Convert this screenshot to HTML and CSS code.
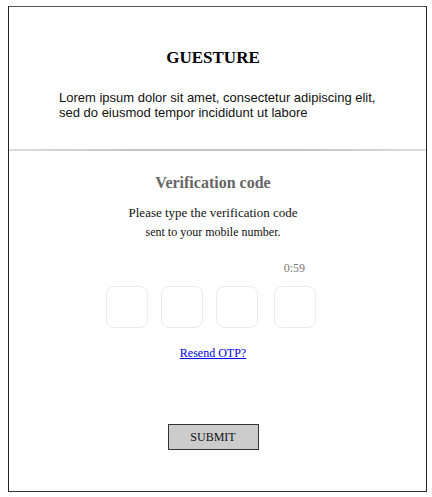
FILE: index.html
```html
<!DOCTYPE html>
<html>
<head>
<meta charset="utf-8">
<link rel="stylesheet" href="styles.css">
</head>
<body>
<div class="frame">
  <header class="top">
    <h1 class="brand">GUESTURE</h1>
    <p class="lorem">Lorem ipsum dolor sit amet, consectetur adipiscing elit,<br>sed do eiusmod tempor incididunt ut labore</p>
  </header>
  <div class="divider"></div>
  <section class="verify">
    <h2 class="vtitle">Verification code</h2>
    <p class="line1">Please type the verification code</p>
    <p class="line2">sent to your mobile number.</p>
    <div class="timer">0:59</div>
    <div class="otp">
      <div class="box"></div>
      <div class="box"></div>
      <div class="box"></div>
      <div class="box box-last"></div>
    </div>
    <a class="resend" href="#">Resend OTP?</a>
    <button class="submit">SUBMIT</button>
  </section>
</div>
</body>
</html>
```
FILE: styles.css
```css
html, body { margin: 0; padding: 0; background: #fff; }
body { font-family: "Liberation Serif", serif; }
.frame {
  margin: 6px 0 0 8px;
  width: 417px;
  height: 484px;
  border: 1px solid #222;
  border-top-color: #555;
  border-bottom-color: #333;
  display: flex;
  flex-direction: column;
}
.top { height: 142px; display: flex; flex-direction: column; align-items: center; padding-right: 9px; }
.brand {
  margin: 41px 0 0;
  font-size: 17px;
  font-weight: bold;
  line-height: 20px;
  color: #000;
}
.lorem {
  margin: 22px 0 0;
  align-self: flex-start;
  padding-left: 50px;
  font-family: "Liberation Sans", sans-serif;
  font-size: 13px;
  line-height: 15px;
  color: #111;
}
.divider { height: 2px; background: linear-gradient(90deg, #ddd, #c4c4c4 30%, #c4c4c4 70%, #ddd); }
.verify { display: flex; flex-direction: column; align-items: center; padding-right: 9px; }
.vtitle {
  margin: 22px 0 0;
  font-size: 16px;
  line-height: 20px;
  font-weight: bold;
  color: #666;
}
.line1 { margin: 12px 0 0; font-size: 13px; line-height: 16px; color: #111; }
.line2 { margin: 4px 0 0; font-size: 12px; line-height: 15px; color: #111; }
.timer {
  align-self: flex-end;
  margin: 21px 112px 0 0;
  font-size: 12px;
  line-height: 15px;
  color: #777;
}
.otp { display: flex; gap: 13px; margin: 10px 5px 0 0; }
.box {
  width: 40px;
  height: 40px;
  border: 1px solid #ebebeb;
  border-radius: 8px;
}
.box-last { margin-left: 3px; }
.resend {
  margin-top: 18px;
  font-size: 12px;
  line-height: 15px;
  color: #00e;
  text-decoration: underline;
}
.submit {
  margin-top: 63px;
  width: 91px;
  height: 26px;
  background: #ccc;
  border: 1px solid #333;
  font-family: "Liberation Serif", serif;
  font-size: 12px;
  color: #111;
  padding: 0;
}
```
